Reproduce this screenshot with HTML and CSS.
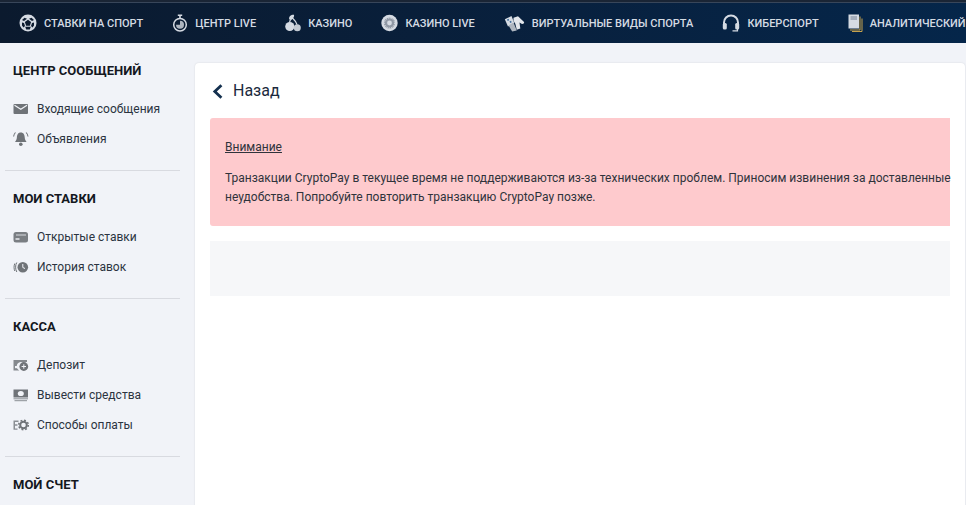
FILE: index.html
```html
<!DOCTYPE html>
<html lang="ru">
<head>
<meta charset="utf-8">
<title>Центр сообщений</title>
<link rel="stylesheet" href="styles.css">
</head>
<body>
<nav class="topbar">
  <a class="tab"><svg class="tab-icon w18" viewBox="0 0 18 18"><circle cx="9" cy="9" r="8.500" fill="#d5dbe3"/><path d="M9 5.800l3.100 2.300-1.200 3.600H7.100L5.900 8.100z" fill="#0b1a2e"/><path d="M5.500 3.800L8 4.800 5 7 3 6zM12.500 3.800L10 4.800 13 7 15 6zM6.200 12.800l1 2.700 3.600 0 1-2.700zM3 8.500l2 .5 1 3-1.500 1.500L3 11.500zM15 8.500l-2 .5-1 3 1.500 1.500 1.500-2z" fill="#0b1a2e"/></svg><span>СТАВКИ НА СПОРТ</span></a>
  <a class="tab"><svg class="tab-icon w16" viewBox="0 0 16 18"><circle cx="8" cy="10.700" r="6.300" fill="none" stroke="#d5dbe3" stroke-width="1.500"/><path d="M8 10.700V6.700A4 4 0 1 1 4 10.700z" fill="#aeb6c0"/><path d="M5.800 1.200h4.400M8 1.200v3.200" stroke="#d5dbe3" stroke-width="1.600"/></svg><span>ЦЕНТР LIVE</span></a>
  <a class="tab"><svg class="tab-icon w16" viewBox="0 0 16 18"><circle cx="4.800" cy="12.500" r="4.600" fill="#d5dbe3"/><circle cx="12.300" cy="13.700" r="3.500" fill="#c3cad3"/><path d="M4.500 8.500C4.800 6.200 6 5 7.500 4M7.500 4c1.800 1.800 3.800 4 4.500 6.500" stroke="#d5dbe3" fill="none" stroke-width="1.200"/><path d="M4.200 5.500C3.500 2.500 6 .6 9 .8 9.500 3.500 7.500 5.800 4.200 5.500z" fill="#d5dbe3"/></svg><span>КАЗИНО</span></a>
  <a class="tab"><svg class="tab-icon w17" viewBox="0 0 17 18"><circle cx="8.500" cy="9" r="8.200" fill="#d5dbe3"/><circle cx="8.500" cy="9" r="5.600" fill="#8f98a5"/><circle cx="8.500" cy="9" r="5" fill="none" stroke="#e3e7ec" stroke-width="1" stroke-dasharray="1.200 1.200"/><circle cx="8.500" cy="9" r="2.400" fill="#d5dbe3"/></svg><span>КАЗИНО LIVE</span></a>
  <a class="tab"><svg class="tab-icon w21" viewBox="0 0 21 18"><path d="M.8 5.200L7.500 2 10.300 9 4 12.500z" fill="#d5dbe3"/><path d="M3 5.500l1.500-.7.700 1.500-1.500.7zM5.500 7.500l1.500-.7.700 1.500-1.500.7z" fill="#3d6a9a"/><path d="M4.500 11.500L9.500 8.500 12.800 16.500 8.200 17.500z" fill="#aeb6c0"/><path d="M9.500 3.800L14 2.200l5.800 5.600c.6.700.4 1.500-.5 2l-1.300.2-2.500-1.500.8 6-3.500 1.300-1.500-6-1.800-3z" fill="#e3e7ec"/></svg><span>ВИРТУАЛЬНЫЕ ВИДЫ СПОРТА</span></a>
  <a class="tab"><svg class="tab-icon w18" viewBox="0 0 18 18"><path d="M2 11V8.500a7 7 0 0 1 14 0V11" fill="none" stroke="#d5dbe3" stroke-width="2"/><rect x=".8" y="9" width="4" height="6.500" rx="1.500" fill="#d5dbe3"/><rect x="13.200" y="9" width="4" height="6.500" rx="1.500" fill="#d5dbe3"/><path d="M15.500 15v1.800h-5" fill="none" stroke="#d5dbe3" stroke-width="1.200"/></svg><span>КИБЕРСПОРТ</span></a>
  <a class="tab"><svg class="tab-icon w15" viewBox="0 0 15 18"><rect x=".5" y=".5" width="10.500" height="14" fill="#d5dbe3"/><path d="M2.500 3h6.500M2.500 5h6.500" stroke="#5b6b80" stroke-width=".8"/><path d="M12 2.500v13.500H2M14 4.500V17.500H4" fill="none" stroke="#c5a24e" stroke-width="1"/></svg><span>АНАЛИТИЧЕСКИЙ</span></a>
</nav>
<div class="layout">
  <aside class="sidebar">
    <section class="side-group">
      <h3 class="side-title">ЦЕНТР СООБЩЕНИЙ</h3>
      <a class="side-link"><svg class="side-icon" viewBox="0 0 16 14"><rect x=".5" y="2" width="14.500" height="10" rx="1" fill="#6f7378"/><path d="M1.500 3.300L7.800 7.300 14 3.300" fill="none" stroke="#f1f3f8" stroke-width="1.200"/></svg>Входящие сообщения</a>
      <a class="side-link"><svg class="side-icon side-icon-tall" viewBox="0 0 16 16"><path d="M7.800 1.500c2.900 0 3.700 2.200 3.900 4.800.1 2.200 1 3.700 1.900 4.700H2c.9-1 1.800-2.500 1.900-4.700C4.100 3.700 4.900 1.500 7.800 1.500z" fill="#6f7378"/><circle cx="7.800" cy="13.300" r="1.800" fill="#6f7378"/><path d="M2.500 1.500C1.300 2.800.6 4.100.6 5.500M13.100 1.500c1.200 1.300 1.900 2.600 1.900 4" fill="none" stroke="#6f7378" stroke-width="1.100"/></svg>Объявления</a>
    </section>
    <section class="side-group">
      <h3 class="side-title">МОИ СТАВКИ</h3>
      <a class="side-link"><svg class="side-icon" viewBox="0 0 16 14"><rect x=".5" y="2" width="14.500" height="10.500" rx="2.500" fill="#7a7e83"/><path d="M3 5h10" stroke="#f1f3f8" stroke-width=".8"/><path d="M2.500 9h4" stroke="#f1f3f8" stroke-width="1.400"/></svg>Открытые ставки</a>
      <a class="side-link"><svg class="side-icon" viewBox="0 0 16 14"><circle cx="9.800" cy="7.200" r="5.300" fill="#6f7378"/><path d="M9.800 4v3.500l2.200 1" fill="none" stroke="#f1f3f8" stroke-width="1"/><path d="M3.800 2.500C2.200 4.800 2.200 9.500 3.800 12M1.800 3.500C.8 5.500.8 9 1.800 11" fill="none" stroke="#6f7378" stroke-width="1"/></svg>История ставок</a>
    </section>
    <section class="side-group">
      <h3 class="side-title">КАССА</h3>
      <a class="side-link"><svg class="side-icon" viewBox="0 0 16 14"><path d="M.5 2h13.500v2H7.500A4.500 4.500 0 0 0 6.300 12.500H.5z" fill="#85898e"/><rect x="2" y="8" width="2.500" height="2.200" fill="#f1f3f8"/><circle cx="10.800" cy="8.500" r="4.400" fill="#6f7378"/><path d="M10.800 6.300v4.400M8.600 8.500H13" stroke="#f1f3f8" stroke-width="1"/></svg>Депозит</a>
      <a class="side-link"><svg class="side-icon" viewBox="0 0 16 14"><rect x=".5" y="1.500" width="14.500" height="8" fill="#6f7378"/><ellipse cx="7.800" cy="5.500" rx="3" ry="2.600" fill="#f1f3f8"/><path d="M.5 10.800h14.500M1.500 12.700h12.500" stroke="#8b8f94" stroke-width="1"/></svg>Вывести средства</a>
      <a class="side-link"><svg class="side-icon" viewBox="0 0 16 14"><path d="M.5 2.500h5v1.400H2v2.400h2.500v1.400H2v2.700h2.500v1.400H.5z" fill="#8b8f94"/><circle cx="10.500" cy="7" r="3.300" fill="none" stroke="#6f7378" stroke-width="2"/><circle cx="10.500" cy="7" r="4.800" fill="none" stroke="#6f7378" stroke-width="1.500" stroke-dasharray="1.900 1.870"/></svg>Способы оплаты</a>
    </section>
    <section class="side-group">
      <h3 class="side-title">МОЙ СЧЕТ</h3>
    </section>
  </aside>
  <main class="card">
    <a class="back"><svg class="back-icon" viewBox="0 0 11 15"><path d="M9.400 1.200L2.800 7.500l6.600 6.300" fill="none" stroke="#14304f" stroke-width="2.800"/></svg>Назад</a>
    <div class="alert">
      <p class="alert-title">Внимание</p>
      <p class="alert-text">Транзакции CryptoPay в текущее время не поддерживаются из-за технических проблем. Приносим извинения за доставленные неудобства. Попробуйте повторить транзакцию CryptoPay позже.</p>
    </div>
    <div class="empty"></div>
  </main>
</div>
</body>
</html>
```

FILE: styles.css
```css
* { box-sizing: border-box; }
html, body { margin: 0; height: 100%; overflow: hidden; }
body { background: #f1f3f8; font-family: Roboto, "Liberation Sans", sans-serif; color: #1b2430; }
.topbar {
  height: 43px;
  display: flex;
  align-items: center;
  gap: 29px;
  padding: 3px 0 0 19px;
  white-space: nowrap;
  overflow: hidden;
  background:
    linear-gradient(#1a2535 0 2px, #38465a 2px 3px, transparent 3px),
    linear-gradient(90deg, #0b1a2e 0%, #08213f 60%, #05264a 100%);
}
.tab { display: flex; align-items: center; gap: 7px; flex: none; color: #d5dbe3; font-size: 11px; font-weight: 500; }
.tab-icon { height: 18px; flex: none; }
.w15 { width: 15px; }
.w16 { width: 16px; }
.w17 { width: 17px; }
.w18 { width: 18px; }
.w21 { width: 21px; }
.layout { display: flex; height: 462px; padding-left: 5px; overflow: hidden; }
.sidebar { width: 175px; flex: none; margin-right: 15px; }
.side-group { padding: 19px 0 16px 8px; border-bottom: 1px solid #d8dae0; }
.side-group:last-child { border-bottom: 0; }
.side-title { margin: 0 0 14px; font-size: 13px; line-height: 18px; font-weight: 700; color: #14181f; }
.side-link { display: flex; align-items: center; height: 30px; font-size: 12px; color: #2b3340; }
.side-icon { width: 16px; height: 14px; margin-right: 8px; flex: none; }
.side-icon-tall { height: 16px; }
.card { width: 770px; flex: none; height: 470px; margin-top: 20px; background: #fff; border-radius: 4px 4px 0 0; box-shadow: 0 0 2px rgba(0, 0, 0, .12); padding: 0 15px; }
.back { display: flex; align-items: center; height: 55px; font-size: 16px; font-weight: 400; color: #1b2a3d; }
.back-icon { width: 11px; height: 15px; margin: 1px 10px 0 2px; }
.alert { background: #fecacd; border-radius: 3px 0 0 3px; height: 108px; padding: 20px 0 0 15px; font-size: 12px; color: #2f333b; }
.alert-title { margin: 0 0 13px; line-height: 18px; text-decoration: underline; }
.alert-text { margin: 0; line-height: 19px; width: 726px; }
.empty { background: #f6f7f9; height: 55px; margin-top: 15px; }
```
